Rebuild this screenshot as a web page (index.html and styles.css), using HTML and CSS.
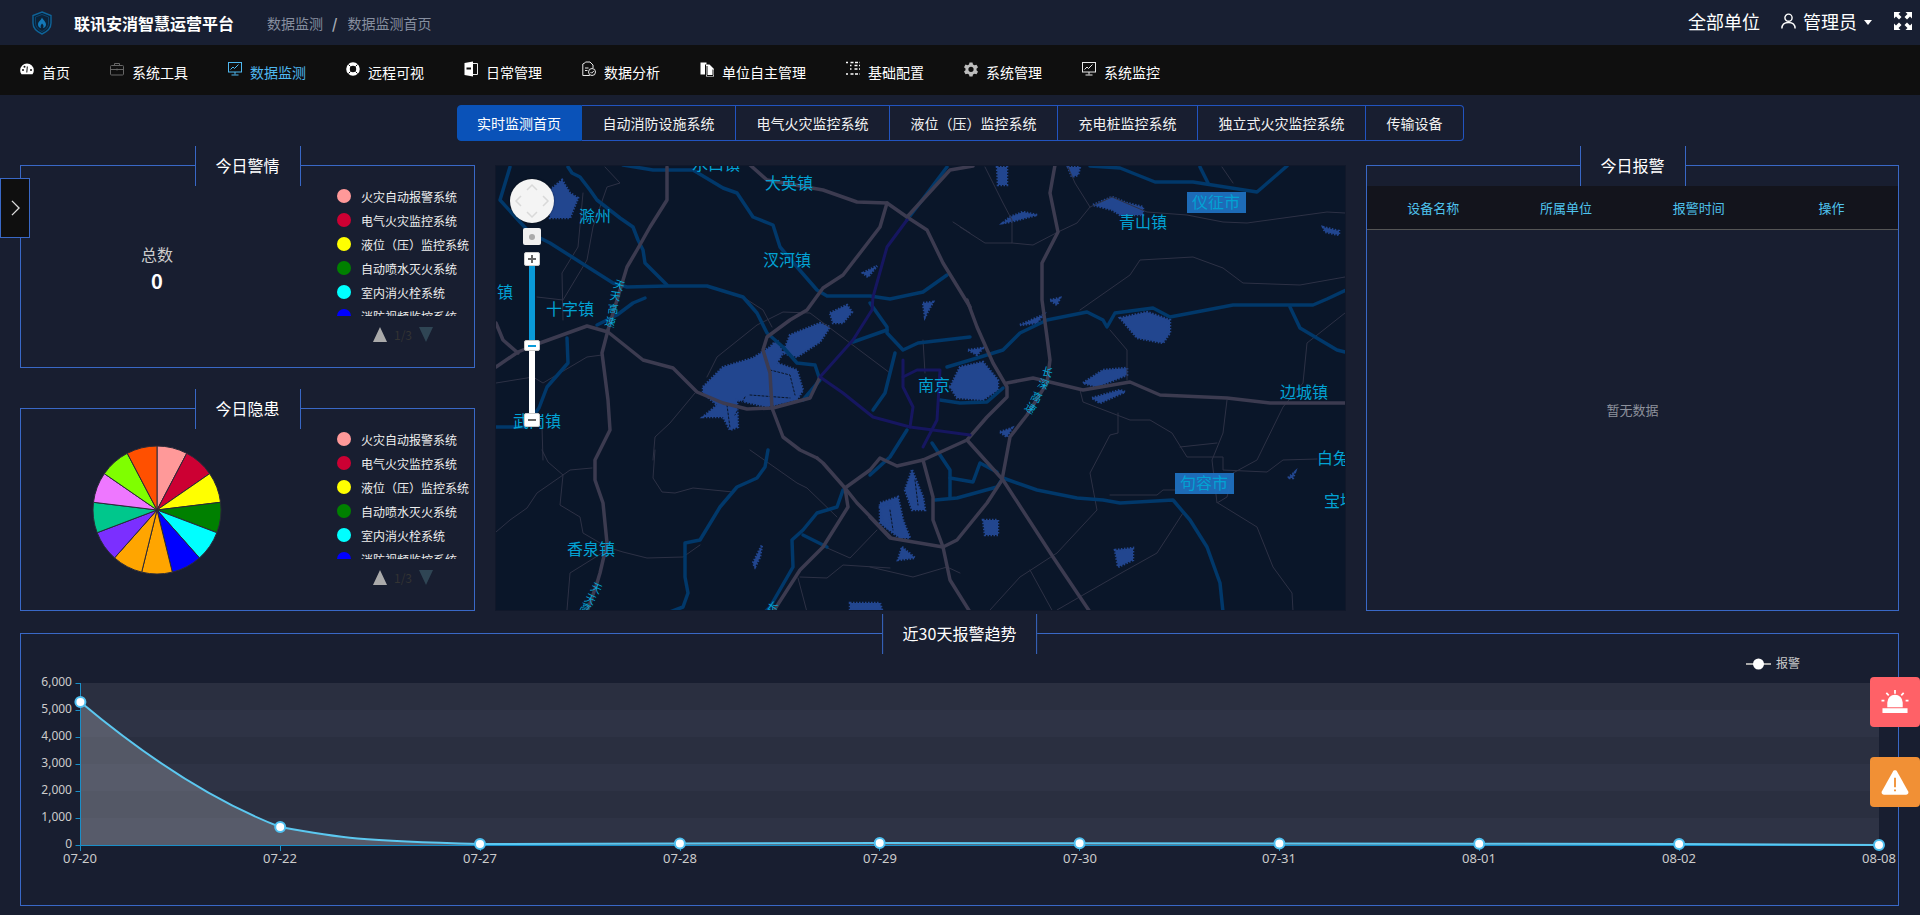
FILE: index.html
```html
<!DOCTYPE html>
<html lang="zh-CN">
<head>
<meta charset="utf-8">
<title>联讯安消智慧运营平台</title>
<link rel="stylesheet" href="styles.css">
</head>
<body>
<header class="topbar">
  <div class="brand">
    <svg class="logo" viewBox="0 0 20 24"><path class="logo-line" d="M10 1 L19 4.500 V12 C19 17.500 14.500 21 10 23 C5.500 21 1 17.500 1 12 V4.500 Z"/><path class="logo-thin" d="M10 3.500 L16.500 6 V12 C16.500 16 13.500 18.800 10 20.500 C6.500 18.800 3.500 16 3.500 12 V6 Z"/><path class="logo-flame" d="M10 6.500 C11 9 14 10.500 14 13.500 C14 15.500 12.500 17 11 17 C12 15.500 11.500 13.500 10 12.500 C9 13.800 8 15 9 17 C7.500 17 6 15.500 6 13.500 C6 10.500 9 9.500 10 6.500 Z"/></svg>
    <span class="brand-name">联讯安消智慧运营平台</span>
  </div>
  <div class="crumbs"><span>数据监测</span><b>/</b><span>数据监测首页</span></div>
  <div class="top-right">
    <span class="scope">全部单位</span>
    <svg class="user-ic" viewBox="0 0 18 18"><circle cx="9" cy="5.500" r="3.800"/><path d="M2 17 C2 12.500 5 10.500 9 10.500 C13 10.500 16 12.500 16 17"/></svg>
    <span class="uname">管理员</span>
    <i class="caret"></i>
    <svg class="full-ic" viewBox="0 0 18 18"><path d="M0 0h6.500L4.500 2l3 3L5 7.500l-3-3L0 6.500zM18 0v6.500l-2-2-3 3L10.500 5l3-3-2-2zM0 18v-6.500l2 2 3-3L7.500 13l-3 3 2 2zM18 18h-6.500l2-2-3-3 2.500-2.500 3 3 2-2z"/></svg>
  </div>
</header>

<nav class="nav">
  <a class="nav-item"><svg viewBox="0 0 14 14"><path class="ic-fill" d="M7 1.500A6.800 6.800 0 0 0 .2 8.300C.2 9.800.7 11.200 1.500 12.300h11c.8-1.100 1.300-2.500 1.300-4A6.800 6.800 0 0 0 7 1.500z"/><circle class="ic-hole" cx="3" cy="8" r="1"/><circle class="ic-hole" cx="4.500" cy="4.800" r="1"/><circle class="ic-hole" cx="11" cy="8" r="1"/><path class="ic-cut" d="M7.300 4.500 6.800 10.500"/></svg><span>首页</span></a>
  <a class="nav-item"><svg viewBox="0 0 14 14"><rect class="ic-grey" x=".5" y="3.500" width="13" height="9.500" rx="1"/><path class="ic-grey" d="M4.500 3.500V1.500h5v2M.5 7.500h13M7 6.500v2"/></svg><span>系统工具</span></a>
  <a class="nav-item active"><svg viewBox="0 0 14 14"><rect class="ic-blue" x=".5" y=".5" width="13" height="9.500"/><path class="ic-blue" d="M2.500 7.500 5 5l1.500 1.500L10.500 2.500M7 10v2.500M3.500 13h7"/></svg><span>数据监测</span></a>
  <a class="nav-item"><svg viewBox="0 0 14 14"><circle class="ic-ring" cx="7" cy="7" r="5"/><path class="ic-cut2" d="M2.500 2.500 4.500 4.500M11.500 2.500 9.500 4.500M2.500 11.500 4.500 9.500M11.500 11.500 9.500 9.500"/></svg><span>远程可视</span></a>
  <a class="nav-item"><svg viewBox="0 0 14 16"><path class="ic-fill" d="M.5 2 9 .5v15L.5 14z"/><rect class="ic-hole" x="2.500" y="6.500" width="4.500" height="2"/><path class="ic-line" d="M9 2.500h4.500v11H9"/></svg><span>日常管理</span></a>
  <a class="nav-item"><svg viewBox="0 0 14 16"><path class="ic-line" d="M3.500 1H8l3 3v3M3.500 1.500.8 3v11.500h7M3 7h3.500M3 9.500h2.500"/><circle class="ic-line" cx="10" cy="11" r="3.500"/><path class="ic-line" d="M8.500 11l1.200 1.200L11.800 10"/></svg><span>数据分析</span></a>
  <a class="nav-item"><svg viewBox="0 0 14 16"><path class="ic-fill" d="M.5 1.500h6v2H5v10H.5z"/><path class="ic-fill" d="M6 3.500h3.500L14 8v7.500H6z"/><path class="ic-cut" d="M7 5v9.500h6V8.500"/></svg><span>单位自主管理</span></a>
  <a class="nav-item"><svg viewBox="0 0 14 16"><path class="ic-dash" d="M0 1.500h2M4.500 1.500H14M4 4.500h1.500M8.500 4.500H14M4 8h1.500M8.500 8H14M0 13h2M4.500 13H14M4 11h0"/></svg><span>基础配置</span></a>
  <a class="nav-item"><svg viewBox="0 0 14 14"><path class="ic-gear" d="M5.500 .5h3l.5 2 1.500.8 2-.6 1.500 2.600-1.500 1.400v1.600l1.500 1.400-1.500 2.600-2-.6-1.500.8-.5 2h-3l-.5-2-1.500-.8-2 .6L0 9.600l1.500-1.400V6.600L0 5.200l1.500-2.600 2 .6L5 2.400zM7 4.700a2.600 2.600 0 1 0 0 5.200 2.600 2.600 0 0 0 0-5.200z"/></svg><span>系统管理</span></a>
  <a class="nav-item"><svg viewBox="0 0 14 14"><rect class="ic-line" x=".5" y=".5" width="13" height="9.500"/><path class="ic-line" d="M2.500 7.500 5 5l1.500 1.500L10.500 2.500M7 10v2.500M3.500 13h7"/></svg><span>系统监控</span></a>
</nav>

<div class="tabs">
  <span class="tab on">实时监测首页</span>
  <span class="tab">自动消防设施系统</span>
  <span class="tab">电气火灾监控系统</span>
  <span class="tab">液位（压）监控系统</span>
  <span class="tab">充电桩监控系统</span>
  <span class="tab">独立式火灾监控系统</span>
  <span class="tab">传输设备</span>
</div>

<main class="main">
  <div class="col-left">
    <section class="panel split">
      <h3 class="ptitle">今日警情</h3>
      <div class="zone"><div class="total"><span>总数</span><strong>0</strong></div></div>
      <div class="legend">
        <ul class="legend-list">
          <li><i class="dot c1"></i>火灾自动报警系统</li>
          <li><i class="dot c2"></i>电气火灾监控系统</li>
          <li><i class="dot c3"></i>液位（压）监控系统</li>
          <li><i class="dot c4"></i>自动喷水灭火系统</li>
          <li><i class="dot c5"></i>室内消火栓系统</li>
          <li><i class="dot c6"></i>消防视频监控系统</li>
        </ul>
        <div class="pager"><i class="tri-up"></i><span>1/3</span><i class="tri-down"></i></div>
      </div>
    </section>
    <section class="panel split">
      <h3 class="ptitle">今日隐患</h3>
      <div class="zone">
        <svg class="pie" viewBox="-65 -65 130 130">
          <path fill="#ff9999" d="M0 0V-64A64 64 0 0 1 29.740-56.670Z"/>
          <path fill="#cc0033" d="M0 0L29.740-56.670A64 64 0 0 1 52.670-36.360Z"/>
          <path fill="#ffff00" d="M0 0L52.670-36.360A64 64 0 0 1 63.530-7.710Z"/>
          <path fill="#008000" d="M0 0L63.530-7.710A64 64 0 0 1 59.840 22.690Z"/>
          <path fill="#00ffff" d="M0 0L59.840 22.690A64 64 0 0 1 42.440 47.900Z"/>
          <path fill="#0000ff" d="M0 0L42.440 47.900A64 64 0 0 1 15.320 62.140Z"/>
          <path fill="#ffa500" d="M0 0L15.320 62.140A64 64 0 0 1 -15.320 62.140Z"/>
          <path fill="#ffa500" d="M0 0L-15.320 62.140A64 64 0 0 1 -42.440 47.900Z"/>
          <path fill="#7b2fff" d="M0 0L-42.440 47.900A64 64 0 0 1 -59.840 22.690Z"/>
          <path fill="#00c78c" d="M0 0L-59.840 22.690A64 64 0 0 1 -63.530-7.710Z"/>
          <path fill="#ee77ff" d="M0 0L-63.530-7.710A64 64 0 0 1 -52.670-36.360Z"/>
          <path fill="#7fff00" d="M0 0L-52.670-36.360A64 64 0 0 1 -29.740-56.670Z"/>
          <path fill="#ff5000" d="M0 0L-29.740-56.670A64 64 0 0 1 0-64Z"/>
        </svg>
      </div>
      <div class="legend">
        <ul class="legend-list">
          <li><i class="dot c1"></i>火灾自动报警系统</li>
          <li><i class="dot c2"></i>电气火灾监控系统</li>
          <li><i class="dot c3"></i>液位（压）监控系统</li>
          <li><i class="dot c4"></i>自动喷水灭火系统</li>
          <li><i class="dot c5"></i>室内消火栓系统</li>
          <li><i class="dot c6"></i>消防视频监控系统</li>
        </ul>
        <div class="pager"><i class="tri-up"></i><span>1/3</span><i class="tri-down"></i></div>
      </div>
    </section>
  </div>

  <div class="map">
    <svg class="map-svg" viewBox="495 165 851 446">
      <g class="water">
        <polygon points="703,387 723,367 753,358 770,347 777,340 783,353 777,363 797,370 803,390 797,400 767,407 737,400 738,427 730,430 723,417 710,417 703,417 717,405 703,393"/>
        <polygon points="783,353 790,335 820,323 830,327 820,342 797,357"/>
        <polygon points="830,313 847,305 852,312 843,323 833,323"/>
        <polygon points="550,190 562,180 570,193 578,198 570,218 550,218"/>
        <polygon points="863,273 877,266 868,277"/>
        <polygon points="923,303 933,302 925,317"/>
        <polygon points="950,387 960,367 983,362 998,380 998,390 983,400 957,398"/>
        <polygon points="968,350 983,348 977,355"/>
        <polygon points="1120,318 1147,312 1170,320 1170,333 1163,343 1137,338"/>
        <polygon points="1083,383 1103,370 1127,368 1127,375 1097,387"/>
        <polygon points="1092,398 1120,390 1125,392 1100,403"/>
        <polygon points="912,470 923,497 925,510 912,510 905,490"/>
        <polygon points="880,503 898,497 903,520 910,538 900,538 893,533 880,523"/>
        <polygon points="902,547 915,558 898,560"/>
        <polygon points="983,520 998,520 998,535 985,535"/>
        <polygon points="1115,550 1133,548 1133,560 1118,567"/>
        <polygon points="1288,478 1295,472 1293,478"/>
        <polygon points="1000,432 1012,428 1007,437"/>
        <polygon points="1020,325 1043,315 1037,323"/>
        <polygon points="997,167 1007,167 1007,185 998,185"/>
        <polygon points="1003,223 1010,217 1023,212 1037,215 1010,222"/>
        <polygon points="1093,205 1112,197 1127,203 1143,207 1143,215 1120,215 1112,210"/>
        <polygon points="1068,167 1080,167 1078,175 1072,177"/>
        <polygon points="1323,227 1339,231 1339,235 1325,232"/>
        <polygon points="1050,300 1060,298 1057,305"/>
        <polygon points="753,563 762,545 760,557 755,567"/>
        <polygon points="850,603 880,603 882,610 850,610"/>
        <polygon points="880,507 890,503 890,530 883,523"/>
      </g>
      <g class="holes">
        <polyline points="770,370 790,375 795,395"/>
        <polyline points="745,397 735,415"/>
        <polyline points="727,405 730,428"/>
        <polyline points="750,395 790,398"/>
        <polyline points="890,510 893,530"/>
        <polyline points="915,480 918,505"/>
      </g>
      <g class="thin">
        <polyline points="985,167 1003,203 1012,220 1012,243 985,243 960,227"/>
        <polyline points="1012,243 1033,245 1058,232 1077,223 1090,207 1112,197 1147,212 1187,215 1223,222 1247,223 1327,212 1345,213"/>
        <polyline points="1068,167 1075,183 1090,207"/>
        <polyline points="1080,310 1130,275 1140,260 1193,257 1223,268 1243,283 1300,285 1345,277"/>
        <polyline points="1222,167 1233,183"/>
        <polyline points="1227,400 1223,433 1212,460 1217,503 1227,497 1233,473 1257,460 1283,407 1303,383 1307,343 1345,313"/>
        <polyline points="1080,390 1083,402 1130,420 1150,420 1172,433 1187,457 1223,457 1223,470 1267,472 1283,460 1317,459"/>
        <polyline points="1118,413 1118,433 1110,435 1090,473 1097,510 1057,553 1020,577 990,610"/>
        <polyline points="1110,495 1157,495 1163,490 1217,490"/>
        <polyline points="1218,503 1257,527 1273,567 1292,593 1293,611"/>
        <polyline points="1183,513 1157,553 1123,572 1083,595 1057,610"/>
        <polyline points="1180,447 1217,443"/>
        <polyline points="870,567 913,577 947,567 960,573"/>
        <polyline points="1030,570 1053,612"/>
        <polyline points="1110,330 1127,350 1127,380"/>
        <polyline points="537,297 563,300 587,260 593,227 607,187 620,183 605,167"/>
        <polyline points="563,320 562,273 578,247 583,193"/>
        <polyline points="496,383 533,377 543,383 587,357 602,355"/>
        <polyline points="695,393 670,423 655,437 653,460"/>
        <polyline points="707,377 717,357 757,325 783,312 810,313 850,343 890,373"/>
        <polyline points="743,297 763,310 772,327"/>
        <polyline points="953,222 970,233"/>
        <polyline points="923,340 925,373"/>
        <polyline points="542,427 543,460"/>
        <polyline points="496,532 510,520 527,508 537,493 563,475 570,470 592,468"/>
        <polyline points="542,450 548,462 563,475 560,505 580,517 583,533 607,547 623,552 647,558 683,557 700,545"/>
        <polyline points="607,550 570,573 567,610"/>
        <polyline points="655,450 653,478 662,492 675,493 693,488 733,492"/>
        <polyline points="750,450 797,483 807,488 837,517"/>
        <polyline points="825,547 850,558 877,530"/>
        <polyline points="800,577 827,578 843,565 890,568"/>
        <polyline points="798,578 807,612"/>
      </g>
      <g class="rblue">
        <polyline points="568,167 572,173 580,177 590,190 597,200 620,218 633,227 638,240 643,250 645,263 667,285"/>
        <polyline points="510,167 500,200 530,233 550,243 613,283 627,287 667,286 707,286 743,297 757,313 767,333 783,347 797,363 815,365 820,380 803,400"/>
        <polyline points="623,165 653,170 693,170 723,188 737,193 753,217 773,225 780,247 797,267 817,290 827,296 870,296 890,299 923,292 947,275"/>
        <polyline points="907,220 947,167"/>
        <polyline points="870,303 887,327 887,333 903,350 918,343 970,337"/>
        <polyline points="853,342 887,330"/>
        <polyline points="496,427 525,427 539,408 547,387 568,363 567,338"/>
        <polyline points="597,325 617,315 633,303 645,298"/>
        <polyline points="895,353 885,393 873,410"/>
        <polyline points="947,367 977,358 1003,350 1020,333 1047,320 1087,312 1103,320 1107,327 1115,313 1153,308 1170,317 1233,305 1313,305 1327,299 1346,290"/>
        <polyline points="1290,307 1300,328 1337,350 1345,352"/>
        <polyline points="940,400 960,403 987,402 1003,388"/>
        <polyline points="907,430 890,457 870,475"/>
        <polyline points="932,443 950,470 950,498"/>
        <polyline points="935,500 957,498 997,487 1003,478 1037,490 1077,498 1103,500 1120,503 1173,500 1190,520 1207,547 1220,583 1223,612"/>
        <polyline points="950,478 973,482 980,463 997,472"/>
        <polyline points="768,450 765,467 757,478 737,487 720,507 700,540 685,543 685,577 688,593 683,607 670,612"/>
        <polyline points="843,490 837,507 817,513 803,530 792,540 793,567 770,607 765,612"/>
        <polyline points="803,535 827,547"/>
        <polyline points="1090,166 1120,168 1155,182 1193,182 1257,192 1287,166"/>
        <polyline points="1200,167 1208,183"/>
      </g>
      <g class="rgrey">
        <polyline points="750,165 767,180 823,190 857,202 887,203 907,217 927,230 943,263 970,307"/>
        <polyline points="667,167 667,200 650,227 637,250 627,267 617,300 608,330"/>
        <polyline points="496,367 518,352 540,343 587,326 608,332 643,360 673,368 697,392 723,403 747,409 773,408 810,398 820,377"/>
        <polyline points="887,203 880,227 860,253 843,275 823,288 807,310 790,320 767,337 763,350 770,373 772,408 783,437 800,450 817,458"/>
        <polyline points="608,330 602,353 608,400 610,430 600,450 595,460 595,480 603,503 607,543 600,573 597,583 587,612"/>
        <polyline points="496,323 503,340 518,353"/>
        <polyline points="967,300 977,327 993,363 1007,387 1007,397 987,417 967,440 923,460 897,466 880,458 870,470 845,488"/>
        <polyline points="1055,165 1050,193 1058,232 1042,263 1042,300 1047,337 1050,360 1047,383 1027,415 1010,437 1002,480 987,503 957,540 943,547 890,538 870,517"/>
        <polyline points="1007,383 1033,378 1083,390 1130,382 1160,395 1227,398 1270,403 1346,403"/>
        <polyline points="967,440 1003,480 1053,557 1090,612"/>
        <polyline points="923,460 933,497 933,520 943,547 950,580 970,612"/>
        <polyline points="817,458 823,463 845,488 857,503 890,537"/>
        <polyline points="845,488 848,507 823,547 800,570 773,612"/>
        <polyline points="973,166 950,170 907,217"/>
      </g>
      <g class="rpurple">
        <polyline points="907,220 887,247 873,297 872,310 853,340 820,377 843,393 873,417 910,427 933,430 970,435"/>
        <polyline points="903,360 903,387 913,407 910,427"/>
        <polyline points="903,377 917,370 940,370 937,420 923,447"/>
      </g>
      <g class="labels">
        <rect class="lbox" x="1187" y="192" width="59" height="21"/>
        <rect class="lbox" x="1175" y="473" width="59" height="21"/>
        <text x="692" y="170">水口镇</text>
        <text x="765" y="189">大英镇</text>
        <text x="579" y="222">滁州</text>
        <text x="763" y="266">汊河镇</text>
        <text x="497" y="298">镇</text>
        <text x="546" y="315">十字镇</text>
        <text x="513" y="427">武岗镇</text>
        <text x="918" y="391">南京</text>
        <text x="567" y="555">香泉镇</text>
        <text x="1119" y="228">青山镇</text>
        <text x="1192" y="208">仪征市</text>
        <text x="1280" y="398">边城镇</text>
        <text x="1180" y="489">句容市</text>
        <text x="1317" y="464">白兔镇</text>
        <text x="1324" y="507">宝堰镇</text>
      </g>
      <g class="rlabels">
        <text transform="translate(619 286) rotate(20)">天</text>
        <text transform="translate(615 297) rotate(8)">天</text>
        <text transform="translate(613 310) rotate(5)">高</text>
        <text transform="translate(610 323) rotate(15)">速</text>
        <text transform="translate(1047 373) rotate(15)">长</text>
        <text transform="translate(1043 385) rotate(20)">深</text>
        <text transform="translate(1036 398) rotate(25)">高</text>
        <text transform="translate(1030 409) rotate(35)">速</text>
        <text transform="translate(596 589) rotate(25)">天</text>
        <text transform="translate(590 600) rotate(25)">天</text>
        <text transform="translate(585 609) rotate(25)">高</text>
        <text transform="translate(772 608) rotate(35)">长</text>
      </g>
    </svg>
    <div class="map-ctrl">
      <div class="pan"><svg viewBox="0 0 44 44"><path d="M17 11l5-5 5 5M11 17l-5 5 5 5M33 17l5 5-5 5M17 33l5 5 5-5"/></svg></div>
      <div class="locate"><i></i></div>
      <div class="zbtn plus"><i></i><i class="v"></i></div>
      <div class="ztrack-on"></div>
      <div class="zbtn handle"><i></i></div>
      <div class="ztrack-off"></div>
      <div class="zbtn minus"><i></i></div>
    </div>
  </div>

  <section class="panel alarms">
    <h3 class="ptitle">今日报警</h3>
    <div class="thead"><span>设备名称</span><span>所属单位</span><span>报警时间</span><span>操作</span></div>
    <div class="empty">暂无数据</div>
  </section>
</main>

<section class="panel trend">
  <h3 class="ptitle">近30天报警趋势</h3>
  <svg class="chart" viewBox="21 634 1877 271">
    <g class="bands">
      <rect class="b1" x="80.500" y="683" width="1798.500" height="27"/>
      <rect class="b2" x="80.500" y="710" width="1798.500" height="27"/>
      <rect class="b1" x="80.500" y="737" width="1798.500" height="27"/>
      <rect class="b2" x="80.500" y="764" width="1798.500" height="27"/>
      <rect class="b1" x="80.500" y="791" width="1798.500" height="27"/>
      <rect class="b2" x="80.500" y="818" width="1798.500" height="27.500"/>
    </g>
    <path class="area" d="M80.400 702C140 752 210 800 280.200 827C340 838 360 841 480 844L679.900 843.500L879.700 843L1079.600 843.300L1279.400 843.500L1479.200 843.800L1679.100 844L1879 845V845.500H80.400Z"/>
    <path class="axis" d="M80.500 683V845.500M75.500 683.500H80.500M75.500 710.500H80.500M75.500 737.500H80.500M75.500 764.500H80.500M75.500 791.500H80.500M75.500 818.500H80.500M75.500 845.500H1879M80.500 845.500V851M280.500 845.500V851M480.500 845.500V851M680.500 845.500V851M879.500 845.500V851M1079.500 845.500V851M1279.500 845.500V851M1479.500 845.500V851M1679.500 845.500V851M1879.500 845.500V851"/>
    <path class="curve" d="M80.400 702C140 752 210 800 280.200 827C340 838 360 841 480 844L679.900 843.500L879.700 843L1079.600 843.300L1279.400 843.500L1479.200 843.800L1679.100 844L1879 845"/>
    <g class="marks">
      <circle cx="80.400" cy="702" r="5"/><circle cx="280.200" cy="827" r="5"/><circle cx="480" cy="844" r="5"/><circle cx="679.900" cy="843.500" r="5"/><circle cx="879.700" cy="843" r="5"/><circle cx="1079.600" cy="843.300" r="5"/><circle cx="1279.400" cy="843.500" r="5"/><circle cx="1479.200" cy="843.800" r="5"/><circle cx="1679.100" cy="844" r="5"/><circle cx="1879" cy="845" r="5"/>
    </g>
    <g class="ylabels">
      <text x="72" y="686">6,000</text><text x="72" y="713">5,000</text><text x="72" y="740">4,000</text><text x="72" y="767">3,000</text><text x="72" y="794">2,000</text><text x="72" y="821">1,000</text><text x="72" y="848">0</text>
    </g>
    <g class="xlabels">
      <text x="80" y="863">07-20</text><text x="280" y="863">07-22</text><text x="480" y="863">07-27</text><text x="680" y="863">07-28</text><text x="880" y="863">07-29</text><text x="1080" y="863">07-30</text><text x="1279" y="863">07-31</text><text x="1479" y="863">08-01</text><text x="1679" y="863">08-02</text><text x="1879" y="863">08-08</text>
    </g>
    <path class="leg-line" d="M1746 664H1771"/>
    <circle class="leg-dot" cx="1758.500" cy="664" r="5.500"/>
    <text class="leg-text" x="1776" y="668">报警</text>
  </svg>
</section>

<button class="side-toggle" type="button"><svg viewBox="0 0 10 18"><path d="M1 1l8 8-8 8"/></svg></button>
<a class="float red"><svg viewBox="0 0 28 28"><path d="M6 19V14a8 8 0 0 1 16 0v5zM1 20h26v5H1z"/><path class="rays" d="M14 1v4M5 4l2.500 2.500M23 4l-2.500 2.500M0 12h3M25 12h3"/></svg></a>
<a class="float orange"><svg viewBox="0 0 30 28"><path d="M15 1C16 1 16.800 1.500 17.500 2.700L29 23.500C30 25.500 29 27 27 27H3C1 27 0 25.500 1 23.500L12.500 2.700C13.200 1.500 14 1 15 1Z"/><path class="bang" d="M15 9V19M15 21.500V23.500"/></svg></a>
</body>
</html>
```
FILE: styles.css
```css
* { box-sizing: border-box; }
html, body { margin: 0; padding: 0; }
body {
  position: relative;
  width: 1920px;
  height: 915px;
  overflow: hidden;
  background: #181e30;
  color: #fff;
  font-family: "Noto Sans CJK SC", "Noto Sans", sans-serif;
  font-size: 14px;
}
ul { list-style: none; margin: 0; padding: 0; }
h3 { margin: 0; font-weight: 400; }

/* top bar */
.topbar { display: flex; align-items: center; height: 45px; background: #181f32; padding-left: 32px; }
.brand { display: flex; align-items: center; }
.logo { width: 20px; height: 24px; margin-right: 22px; }
.logo-line { fill: #0b2238; stroke: #0f6398; stroke-width: 1.4; }
.logo-thin { fill: none; stroke: #0d4a78; stroke-width: .8; }
.logo-flame { fill: #1478b8; }
.brand-name { font-size: 16px; font-weight: 700; line-height: 1; }
.crumbs { display: flex; align-items: center; margin-left: 33px; color: #868e9f; font-size: 14px; }
.crumbs b { color: #a8adb8; margin: 0 10px 0 9px; font-weight: 700; }
.top-right { display: flex; align-items: center; margin-left: auto; font-size: 18px; padding-right: 8px; height: 41px; align-self: flex-start; }
.scope { margin-right: 20px; }
.user-ic { width: 17px; height: 18px; fill: none; stroke: #fff; stroke-width: 1.5; margin-right: 6px; }
.caret { width: 0; height: 0; border: 4px solid transparent; border-top: 5px solid #fff; border-bottom: 0; margin: 4px 22px 0 7px; }
.full-ic { width: 18px; height: 18px; fill: #fff; }

/* nav */
.nav { display: flex; align-items: center; height: 50px; background: #0f0f0f; }
.nav-item { display: flex; align-items: center; padding: 0 20px; color: #fff; font-size: 14px; line-height: 20px; }
.nav-item span { margin-left: 8px; margin-top: 3px; }
.nav-item svg { width: 14px; height: 16px; margin-top: -3px; }
.nav-item.active { color: #4fb8f0; }
.ic-fill { fill: #fff; }
.ic-hole { fill: #0f0f0f; }
.ic-cut { fill: none; stroke: #0f0f0f; stroke-width: 1; }
.ic-cut2 { fill: none; stroke: #0f0f0f; stroke-width: 1; }
.ic-grey { fill: none; stroke: #666; stroke-width: 1; }
.ic-blue { fill: none; stroke: #4fb8f0; stroke-width: 1; }
.ic-line { fill: none; stroke: #e8e8e8; stroke-width: 1; }
.ic-ring { fill: none; stroke: #fff; stroke-width: 3.600; }
.ic-dash { fill: none; stroke: #fff; stroke-width: 1.600; stroke-dasharray: 3 1.500; }
.ic-gear { fill: #bdbdbd; fill-rule: evenodd; }

/* tabs */
.tabs { display: flex; justify-content: center; margin-top: 10px; height: 36px; padding-left: 1px; }
.tab { display: flex; align-items: center; padding: 0 20.500px; border: 1px solid #2254c0; border-left-width: 0; font-size: 14px; color: #f2f2f2; line-height: 1; }
.tab:first-child { border-left-width: 1px; border-radius: 4px 0 0 4px; }
.tab:last-child { border-radius: 0 4px 4px 0; }
.tab.on { background: #0a52b8; color: #fff; border-color: #0a52b8; padding: 0 20px 0 19px; }

/* main grid */
.main { display: grid; grid-template-columns: 455px 851px 533px; column-gap: 20px; height: 446px; margin-top: 24px; padding-left: 20px; }
.col-left { display: flex; flex-direction: column; gap: 40px; }
.panel { position: relative; border: 1px solid #3968c6; }
.ptitle { position: absolute; left: 50%; top: -20px; transform: translateX(-50%); height: 40px; padding: 0 20px; background: #181e30; border: solid #3968c6; border-width: 0 1px; font-size: 16px; line-height: 38px; color: #fff; white-space: nowrap; z-index: 1; }
.split { display: flex; flex: 1; }
.zone { width: 272px; display: flex; align-items: center; justify-content: center; }
.total { display: flex; flex-direction: column; align-items: center; padding-top: 5px; color: #ccc; font-size: 16px; line-height: 24px; }
.total strong { color: #fff; font-size: 20px; line-height: 30px; font-weight: 700; }
.pie { width: 130px; height: 130px; display: block; }
.pie path { stroke: #2a2a38; stroke-width: 1; }
.legend { margin-left: 44px; padding-top: 18px; }
.legend-list { height: 132px; overflow: hidden; }
.legend-list li { display: flex; align-items: center; height: 24px; font-size: 12px; color: #eee; white-space: nowrap; }
.dot { width: 14px; height: 14px; border-radius: 50%; margin-right: 10px; flex: none; }
.c1 { background: #ff9999; }
.c2 { background: #cc0033; }
.c3 { background: #ffff00; }
.c4 { background: #008000; }
.c5 { background: #00ffff; }
.c6 { background: #0000ff; }
.pager { display: flex; align-items: center; height: 15px; margin-top: 11px; padding-left: 36px; font-size: 12px; color: #333; }
.pager span { margin: 0 7px; }
.tri-up { width: 0; height: 0; border: 7.500px solid transparent; border-top: 0; border-bottom: 15px solid #aaa; }
.tri-down { width: 0; height: 0; border: 7.500px solid transparent; border-bottom: 0; border-top: 15px solid #2f4554; }

/* map */
.map { position: relative; overflow: hidden; background: #0a1629; outline: 1px solid #11182a; outline-offset: -1px; }
.map-svg { display: block; width: 851px; height: 446px; }
.map-svg polyline { fill: none; stroke-linejoin: round; stroke-linecap: round; }
.water { fill: #22468f; stroke: #22468f; stroke-width: 2.500; stroke-dasharray: 1.500 1.500; }
.holes polyline { stroke: #0a1629; stroke-width: 1; stroke-dasharray: 2 2; }
.thin polyline { stroke: #2d3145; stroke-width: 1; }
.rblue polyline { stroke: #01386a; stroke-width: 3.500; }
.rgrey polyline { stroke: #3c3b50; stroke-width: 3.500; }
.rpurple polyline { stroke: #161660; stroke-width: 3; }
.labels text { font-size: 16px; fill: #02a2d4; }
.lbox { fill: #1f70bf; opacity: .95; }
.rlabels text { font-size: 11px; fill: #05a5d5; text-anchor: middle; dominant-baseline: middle; }
.map-ctrl { position: absolute; left: 15px; top: 14px; width: 44px; display: flex; flex-direction: column; align-items: center; }
.pan { width: 44px; height: 44px; border-radius: 50%; background: #f4f4f4; box-shadow: 0 0 2px rgba(0,0,0,.5); }
.pan svg { display: block; width: 44px; height: 44px; fill: none; stroke: #d9d9d9; stroke-width: 1.500; }
.locate { display: flex; align-items: center; justify-content: center; width: 18px; height: 17px; margin-top: 5px; background: #f0f0f0; border-radius: 2px; }
.locate i { width: 6px; height: 6px; border-radius: 50%; background: #aaa; }
.zbtn { position: relative; width: 16px; height: 14px; background: #fff; border: 1px solid #ccc; border-radius: 2px; flex: none; }
.zbtn i { position: absolute; left: 3px; right: 3px; top: 5px; height: 2px; background: #666; }
.zbtn i.v { left: 6px; right: 6px; top: 2px; width: 2px; height: 8px; }
.plus { margin-top: 7px; }
.handle { height: 11px; }
.handle i { background: #0a9ad8; top: 3.500px; }
.ztrack-on { width: 6px; height: 74px; background: #0a9ad8; }
.ztrack-off { width: 6px; height: 62px; background: #fff; }

/* alarms table */
.alarms { display: flex; flex-direction: column; }
.thead { display: grid; grid-template-columns: repeat(4, 1fr); height: 44px; margin-top: 20px; background: #13141c; border-bottom: 1px solid #555; align-items: center; text-align: center; font-size: 13px; color: #4fc3ee; }
.empty { flex: 1; display: flex; align-items: center; justify-content: center; padding-bottom: 22px; font-size: 13px; color: #8d919c; }

/* trend */
.trend { width: 1879px; height: 273px; margin: 22px 0 0 20px; }
.chart { display: block; width: 1877px; height: 271px; }
.b1 { fill: #2a2f40; }
.b2 { fill: #2e3345; }
.area { fill: #fff; opacity: .2; }
.axis { fill: none; stroke: #1a8fc8; stroke-width: 1; }
.curve { fill: none; stroke: #5cc8f0; stroke-width: 2; }
.marks circle { fill: #fff; stroke: #4fc0f0; stroke-width: 2; }
.ylabels text { font-size: 12px; fill: #ccc; text-anchor: end; font-family: "Noto Sans", sans-serif; }
.xlabels text { font-size: 13px; fill: #ccc; text-anchor: middle; font-family: "Noto Sans", sans-serif; }
.leg-line { stroke: #aaa; stroke-width: 2; fill: none; }
.leg-dot { fill: #fff; stroke: #aaa; stroke-width: 0; }
.leg-text { font-size: 12px; fill: #ccc; }

/* overlays */
.side-toggle { position: absolute; left: 0; top: 178px; width: 30px; height: 60px; padding: 0; background: #0f0f0f; border: 1px solid #3968c6; display: flex; align-items: center; justify-content: center; z-index: 3; }
.side-toggle svg { width: 9px; height: 16px; fill: none; stroke: #ddd; stroke-width: 1.500; }
.float { position: absolute; right: 0; width: 50px; height: 50px; border-radius: 4px; display: flex; align-items: center; justify-content: center; z-index: 3; }
.float.red { top: 677px; background: #ff6167; }
.float.orange { top: 757px; background: #f19035; }
.float svg { width: 28px; height: 27px; fill: #fff; }
.rays { fill: none; stroke: #fff; stroke-width: 1.800; }
.bang { fill: none; stroke: #f19035; stroke-width: 2; }
```
